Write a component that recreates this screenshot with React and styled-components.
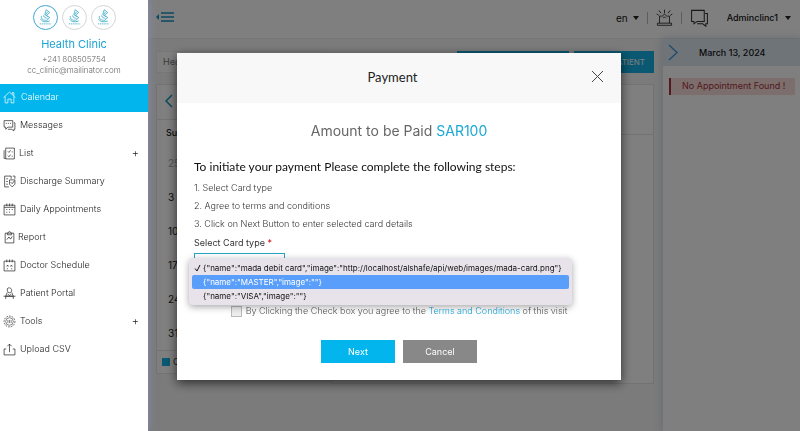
import React from 'react';
import styled, { createGlobalStyle, css } from 'styled-components';

const GlobalStyle = createGlobalStyle`
  * { box-sizing: border-box; }
  body { margin: 0; font-family: Inter, "Open Sans", sans-serif; font-size: 9px; line-height: 12px; color: #333; background: #f7f7f7; }
  button, input, select { font: inherit; color: inherit; margin: 0; }
  button { border: 0; padding: 0; background: none; cursor: pointer; }
  a { color: inherit; text-decoration: none; }
`;

const Page = styled.div`display: flex; min-height: 100vh;`;

/* Sidebar */
const Sidebar = styled.aside`
  position: relative; z-index: 3; flex: 0 0 148px; background: #fff;
  box-shadow: 0 0 9px rgba(135, 145, 200, 0.7);
`;
const Brand = styled.div`
  display: flex; flex-direction: column; align-items: center; height: 84px; padding-top: 5px; color: #666;
`;
const Logos = styled.div`display: flex; gap: 4px; margin-bottom: 8px;`;
const Logo = styled.span`
  display: grid; place-items: center; width: 25px; height: 25px; border-radius: 50%;
  border: 1px solid ${p => (p.$active ? '#3fa9d0' : '#d5d5d5')};
`;
const BrandName = styled.h1`margin: 0 0 3px; font-size: 11px; line-height: 13px; font-weight: 400; color: #1ba3d6;`;
const BrandLine = styled.span`font-size: 8px; line-height: 11px; font-weight: 300;`;
const Menu = styled.nav`display: flex; flex-direction: column;`;
const MenuItem = styled.a`
  display: flex; align-items: center; gap: ${p => p.$gap || 4}px; height: 28px; padding: 0 9px 2px 3px;
  font-size: 9px; font-weight: 300; color: #222;
  ${p => p.$active && css`background: #03b5ed; color: #fff;`}
  svg { flex: none; }
`;
const Plus = styled.span`margin-left: auto; font-size: 11px;`;

/* Main area */
const Main = styled.main`flex: 1; min-width: 0; display: flex; flex-direction: column;`;
const TopBar = styled.header`
  display: flex; align-items: center; height: 39px; padding: 0 9px 2px 8px; background: #fff;
  border-bottom: 1px solid #ececf2; color: #111; font-size: 10px;
`;
const Tools = styled.div`display: flex; align-items: center; margin-left: auto;`;
const TextButton = styled.button`display: flex; align-items: center; gap: 5px;`;
const UserButton = styled(TextButton)`gap: 7px; margin-left: 18px; font-size: 9px; font-weight: 500;`;
const Divider = styled.span`width: 1px; height: 12px; background: #bbb; margin: 0 8px;`;
const Caret = styled.span`border: 3px solid transparent; border-top: 4px solid #222; border-bottom: 0;`;
const Columns = styled.div`flex: 1; display: flex;`;
const Board = styled.section`
  flex: 1; min-width: 0; display: grid; grid-template-columns: 167px 1fr; align-items: start;
  gap: 11px 8px; grid-template-rows: 22px auto; padding: 12px 9px 12px 8px;
`;
const Actions = styled.div`display: flex; justify-content: flex-end; gap: 5px; height: 22px;`;
const Title = styled.div`height: 22px; padding: 4px 6px; background: #fff; color: #777; border: 1px solid #eee;`;
const Action = styled.button`
  width: ${p => p.$width}px; padding-right: 9px; background: #14b0e2; color: #fff; text-align: right; font-size: 8px;
`;
const Panel = styled.div`background: #fff; border: 1px solid #e6e6e6;`;
const CalendarNav = styled.div`display: flex; align-items: center; height: 35px; padding-left: 8px; border-bottom: 1px solid #e6e6e6;`;
const Dates = styled.table`
  width: 100%; border-collapse: collapse; table-layout: fixed; color: #222;
  th, td { padding: 0; text-align: left; }
  th { height: 26px; padding-left: 9px; font-size: 9px; font-weight: 500; }
  td { height: 34px; padding-left: 11px; font-size: 10px; }
  tr:first-child td { color: #aaa; }
`;
const Legend = styled.div`
  display: flex; align-items: center; gap: 3px; height: 23px; padding-left: 5px; border-top: 1px solid #e6e6e6;
  &::before { content: ''; width: 8px; height: 8px; background: #14b0e2; }
`;
const ScheduleHead = styled.div`height: 50px; border-bottom: 1px solid #e6e6e6;`;
const ScheduleBody = styled.div`height: 248px;`;
const Agenda = styled.aside`flex: 0 0 137px; background: #fff; box-shadow: 0 0 9px rgba(150, 165, 195, 0.5);`;
const AgendaHead = styled.div`
  display: flex; align-items: center; gap: 20px; height: 27px; padding-left: 5px; background: #dfe9f3;
  color: #111; font-size: 9px; font-weight: 500;
`;
const Notice = styled.p`
  margin: 12px 5px 0 6px; height: 17px; padding: 2px 0 0 11px; border-left: 2px solid #a8323a; background: #f6dcdb; color: #a8323a;
`;

/* Payment dialog */
const Backdrop = styled.div`
  position: fixed; inset: 0; z-index: 2; display: flex; align-items: flex-start; padding: 53px 179px 0 177px;
  background: rgba(0, 0, 0, 0.5);
`;
const Dialog = styled.section`flex: 1; background: #fff; box-shadow: 0 3px 10px rgba(0, 0, 0, 0.65);`;
const DialogHead = styled.header`
  display: flex; align-items: center; height: 50px; padding: 0 17px 3px 17px; background: #f8f8f8;
  h2 { flex: 1; margin: 0; text-align: center; font-family: Lato, sans-serif; font-size: 13px; line-height: 16px; font-weight: 400; color: #222; }
`;
const Close = styled.button`display: grid;`;
const DialogBody = styled.form`padding: 18px 17px 17px; color: #333;`;
const Amount = styled.p`
  margin: 0 0 17px; text-align: center; font-size: 14px; line-height: 20px; color: #666;
  strong { font-weight: 400; color: #1ba8d6; }
`;
const Lead = styled.h3`margin: 0 0 3px; font-family: Lato, sans-serif; font-size: 12px; line-height: 18px; font-weight: 400; color: #111;`;
const Steps = styled.ol`margin: 0; padding: 0; list-style: none; line-height: 18px; font-weight: 300;`;
const Field = styled.div`position: relative;`;
const Label = styled.label`display: block; line-height: 12px; margin: 4px 0; font-size: 9px; span { color: #c00; }`;
const CardSelect = styled.select`
  display: block; width: 91px; height: 24px; border: 1px solid #2aa3c2; background: #fff; appearance: none; color: transparent;
`;
const Options = styled.ul`
  position: absolute; left: -5px; top: 21px; width: 383px; margin: 0; padding: 3px 3px 2px; list-style: none;
  border-radius: 4px; background: #e8e3ea; box-shadow: 0 2px 7px rgba(0, 0, 0, 0.35); color: #111;
`;
const Option = styled.li`
  display: flex; align-items: center; height: 14px; border-radius: 2px; font-size: 8px; white-space: nowrap;
  ${p => p.$active && css`background: #5a9efb; color: #fff;`}
`;
const Tick = styled.span`
  display: flex; width: 11px; padding-left: 2px;
`;
const Agree = styled.label`
  display: flex; align-items: center; justify-content: center; gap: 4px; margin-top: 28px; font-size: 9px; font-weight: 300; color: #555;
  input { appearance: none; width: 11px; height: 11px; border: 1px solid #bbb; background: #eee; }
  a { color: #1ba3d6; }
`;
const Buttons = styled.div`display: flex; justify-content: center; gap: 8px; margin-top: 23px;`;
const Button = styled.button`width: 74px; height: 23px; color: #fff; font-size: 9px; background: ${p => (p.$primary ? '#03b5ed' : '#888')};`;

const Icon = ({ size = 12, color = 'currentColor', stroke = 1.6, children }) => (
  <svg width={size} height={size} viewBox="0 0 24 24" fill="none" stroke={color} strokeWidth={stroke} aria-hidden="true">{children}</svg>
);

const icons = {
  home: <path d="M1 12 12 2l11 10M4 10v12h5v-7h6v7h5V10M17 6V3h3v6" />,
  chat: <path d="M2 3h16v12H9l-4 4v-4H2zM20 7h2v12h-2v3l-4-3H9M5 8h2m2 0h2m2 0h2" />,
  list: <path d="M5 2h16v20H5zM2 6v15h3M9 8l2 2 3-4M9 16l2 2 3-4M16 9h2m-2 8h2" />,
  summary: <path d="M3 2h12v5M3 2v20h8M6 7h3m-3 5h3m-3 5h3M12 9h10v8l-5 5-5-5zM14 13l3 3 4-5M18 2h4v5" />,
  date: <path d="M2 4h20v18H2zM2 8h20M7 1v5m5-5v5m5-5v5M6 12h2m3 0h2m3 0h2M6 17h2m3 0h2" />,
  report: <path d="M4 4h16v18H4zM8 4l4-3 4 3v3H8zM7 16l4-5 3 4 3-5" />,
  schedule: <path d="M2 4h20v18H2zM7 1v5m5-5v5m5-5v5M7 11l3 3m0-3-3 3m7-3 3 3m0-3-3 3M7 18h2m6 0h2" />,
  patient: <path d="M8 3c3-3 8-1 8 3 0 6-8 6-8 0zM8 10l-3 7h14l-3-7M1 17h22M5 17v5m14-5v5M9 13l3 3 3-3" />,
  gear: <><circle cx="12" cy="12" r="10" strokeDasharray="3 2" /><circle cx="12" cy="12" r="7" strokeWidth="1" /><path d="M9 9v6m3-6v6m3-6v6" strokeWidth="1" /></>,
  upload: <path d="M6 11H2v11h20V11h-4M12 17V2M8 6l4-4 4 4" />,
};

const menu = [
  ['home', 'Calendar', { active: true, gap: 5 }], ['chat', 'Messages'], ['list', 'List', { more: true, gap: 3 }],
  ['summary', 'Discharge Summary'], ['date', 'Daily Appointments'], ['report', 'Report', { gap: 2 }],
  ['schedule', 'Doctor Schedule'], ['patient', 'Patient Portal'], ['gear', 'Tools', { more: true }], ['upload', 'Upload CSV'],
];
const weeks = [25, 3, 10, 17, 24, 31];
const cards = [
  '{"name":"mada debit card","image":"http://localhost/alshafe/api/web/images/mada-card.png"}',
  '{"name":"MASTER","image":""}',
  '{"name":"VISA","image":""}',
];

const Emblem = () => (
  <Icon size={17} color="#4fb3cc" stroke={1.3}>
    <path d="M13 1l5 4-5 4 5 3-4 4M13 1l-2 7 5 3M15 4l-3 4M6 10c0 5 3 6 8 6M5 14c2 4 6 5 13 3M9 9c1 4 4 3 6 5" />
    <path d="M4 21h16" strokeDasharray="2 1" />
  </Icon>
);

export default function App() {
  return (
    <>
      <GlobalStyle />
      <Page>
        <Sidebar>
          <Brand>
            <Logos>{[0, 1, 2].map(i => <Logo key={i} $active={i === 0}><Emblem /></Logo>)}</Logos>
            <BrandName>Health Clinic</BrandName>
            <BrandLine>+241 808505754</BrandLine>
            <BrandLine>cc_clinic@mailinator.com</BrandLine>
          </Brand>
          <Menu>
            {menu.map(([icon, label, o = {}]) => (
              <MenuItem key={label} href="#" $active={o.active} $gap={o.gap}>
                <Icon size={13} stroke={1.3}>{icons[icon]}</Icon>{label}{o.more && <Plus>+</Plus>}
              </MenuItem>
            ))}
          </Menu>
        </Sidebar>
        <Main>
          <TopBar>
            <button aria-label="Collapse menu">
              <svg width="20" height="12" viewBox="0 0 20 12" fill="none" stroke="#1793c2" strokeWidth="1.4"><path d="M5 2h13M5 6h13M5 10h13" /><path d="M3 3v6L0 6z" fill="#1793c2" stroke="none" /></svg>
            </button>
            <Tools>
              <TextButton>en <Caret /></TextButton>
              <Divider />
              <button aria-label="Alerts"><Icon size={17} color="#333" stroke={1.3}><path d="M2 23h20v-3H2zM5 20V10h3M19 20V10h-3M12 6V1M7 6 4 2m13 4 3-4M4 9 1 7m19 2 3-2M8 11l4-4 4 4M10 13l2-2 2 2" /></Icon></button>
              <Divider />
              <button aria-label="Messages"><Icon size={19} color="#333" stroke={1.3}><path d="M2 3h16v14H9l-4 3v-3H2zM19 7h3v13h-2v3l-4-3H9" /></Icon></button>
              <UserButton>Adminclinc1 <Caret /></UserButton>
            </Tools>
          </TopBar>
          <Columns>
            <Board>
              <Title>Health Clinic</Title>
              <Actions>
                <Action $width={112}>ADD APPOINTMENT</Action>
                <Action $width={80}>ADD PATIENT</Action>
              </Actions>
              <Panel>
                <CalendarNav><button aria-label="Previous month"><svg width="8" height="14" viewBox="0 0 8 14" fill="none" stroke="#1490bd" strokeWidth="1.5"><path d="M7 1 1 7l6 6" /></svg></button></CalendarNav>
                <Dates>
                  <thead><tr><th>Sun</th><th colSpan={6} aria-hidden="true" /></tr></thead>
                  <tbody>{weeks.map(w => <tr key={w}><td>{w}</td><td colSpan={6} /></tr>)}</tbody>
                </Dates>
                <Legend>Confirmed</Legend>
              </Panel>
              <Panel><ScheduleHead /><ScheduleBody /></Panel>
            </Board>
            <Agenda>
              <AgendaHead>
                <svg width="11" height="17" viewBox="0 0 11 17" fill="none" stroke="#4a9bdc" strokeWidth="1.5"><path d="m1 1 8 7.500-8 7.500" /></svg>
                March 13, 2024
              </AgendaHead>
              <Notice>No Appointment Found !</Notice>
            </Agenda>
          </Columns>
        </Main>
      </Page>
      <Backdrop>
        <Dialog role="dialog" aria-labelledby="payment-title">
          <DialogHead>
            <h2 id="payment-title">Payment</h2>
            <Close aria-label="Close"><svg width="13" height="13" viewBox="0 0 13 13" stroke="#444"><path d="m1 1 11 11M12 1 1 12" /></svg></Close>
          </DialogHead>
          <DialogBody onSubmit={e => e.preventDefault()}>
            <Amount>Amount to be Paid <strong>SAR100</strong></Amount>
            <Lead>To initiate your payment Please complete the following steps:</Lead>
            <Steps>
              <li>1. Select Card type</li>
              <li>2. Agree to terms and conditions</li>
              <li>3. Click on Next Button to enter selected card details</li>
            </Steps>
            <Field>
              <Label htmlFor="card-type">Select Card type <span>*</span></Label>
              <CardSelect id="card-type">{cards.map(c => <option key={c}>{c}</option>)}</CardSelect>
              <Options>
                {cards.map((c, i) => (
                  <Option key={c} $active={i === 1}>
                    <Tick>{i === 0 && <svg width="7" height="8" viewBox="0 0 7 8" fill="none" stroke="#111" strokeWidth="1"><path d="m1 4.500 2 2.500 3-6" /></svg>}</Tick>{c}
                  </Option>
                ))}
              </Options>
            </Field>
            <Agree><input type="checkbox" /><span>By Clicking the Check box you agree to the <a href="#">Terms and Conditions</a> of this visit</span></Agree>
            <Buttons><Button $primary>Next</Button><Button type="button">Cancel</Button></Buttons>
          </DialogBody>
        </Dialog>
      </Backdrop>
    </>
  );
}
